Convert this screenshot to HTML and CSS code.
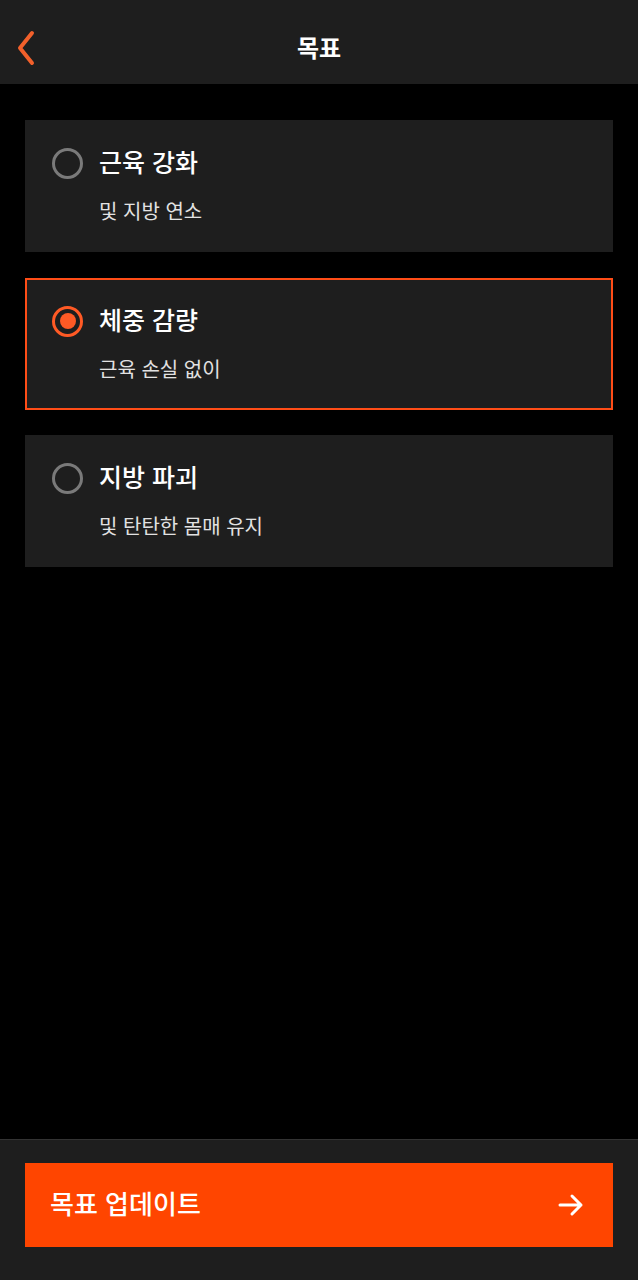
FILE: index.html
```html
<!DOCTYPE html>
<html lang="ko">
<head>
<meta charset="utf-8">
<link rel="stylesheet" href="styles.css">
</head>
<body>
<div class="app">
  <header class="topbar">
    <button class="back" aria-label="뒤로">
      <svg width="20" height="38" viewBox="0 0 20 38"><path d="M16 4 L4 19 L16 34" fill="none" stroke="#f2602b" stroke-width="4" stroke-linecap="round" stroke-linejoin="round"/></svg>
    </button>
    <h1 class="title">목표</h1>
  </header>
  <main class="list">
    <div class="card">
      <div class="row"><span class="radio"></span><span class="card-title">근육 강화</span></div>
      <div class="card-sub">및 지방 연소</div>
    </div>
    <div class="card selected">
      <div class="row"><span class="radio on"></span><span class="card-title">체중 감량</span></div>
      <div class="card-sub">근육 손실 없이</div>
    </div>
    <div class="card">
      <div class="row"><span class="radio"></span><span class="card-title">지방 파괴</span></div>
      <div class="card-sub">및 탄탄한 몸매 유지</div>
    </div>
  </main>
  <footer class="bottom">
    <button class="cta">
      <span>목표 업데이트</span>
      <svg width="28" height="28" viewBox="0 0 28 28"><path d="M3 14 H24 M15 5 L24 14 L15 23" fill="none" stroke="#fff" stroke-width="3" stroke-linecap="round" stroke-linejoin="round"/></svg>
    </button>
  </footer>
</div>
</body>
</html>
```
FILE: styles.css
```css
* { box-sizing: border-box; }
html, body { margin: 0; padding: 0; background: #000; }
body { font-family: "Noto Sans CJK KR", "Noto Sans", sans-serif; color: #fff; }
.app { width: 638px; height: 1280px; display: flex; flex-direction: column; background: #000; }
.topbar { height: 84px; background: #1e1e1e; display: flex; align-items: center; justify-content: center; position: relative; }
.back { position: absolute; left: 16px; top: 29px; background: none; border: 0; padding: 0; width: 20px; height: 38px; display: flex; align-items: center; }
.title { margin: 0; font-size: 24px; font-weight: 700; line-height: 32px; margin-top: 10px; }
.list { flex: 1; padding: 36px 25px 0 25px; display: flex; flex-direction: column; gap: 25px; }
.card { height: 132px; background: #1e1e1e; padding: 25px 0 0 27px; }
.card.selected { border: 2px solid #ff4d17; padding: 23px 0 0 25px; margin-top: 1px; }
.row { display: flex; align-items: center; gap: 16px; height: 32px; }
.radio { width: 31px; height: 31px; border-radius: 50%; border: 3px solid #7a7a7a; flex: none; margin-top: 4px; }
.radio.on { border-color: #ff5a25; display: flex; align-items: center; justify-content: center; }
.radio.on::after { content: ""; width: 16px; height: 16px; border-radius: 50%; background: #ff5a25; }
.card-title { font-size: 25px; font-weight: 500; line-height: 32px; color: #fff; }
.card-sub { margin: 21px 0 0 47px; font-size: 20px; line-height: 26px; color: #e2e2e2; }
.bottom { height: 141px; background: #1e1e1e; border-top: 1px solid #333; padding: 23px 25px 0 25px; }
.cta { width: 588px; height: 84px; background: #ff4500; border: 0; display: flex; align-items: center; justify-content: space-between; padding: 0 28px 0 25px; color: #fff; font-family: inherit; font-size: 26px; font-weight: 500; }
.cta span { margin-top: -6px; }
```
